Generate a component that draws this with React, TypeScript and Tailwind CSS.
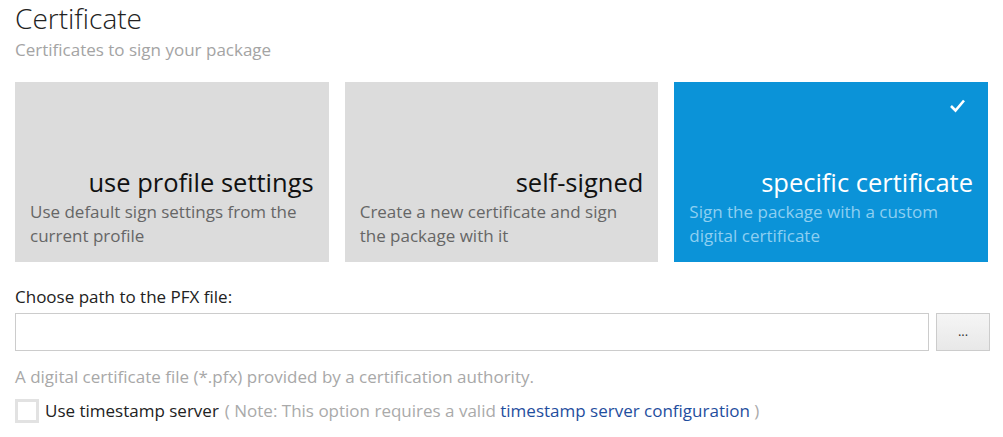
import React from 'react';

const font = { fontFamily: '"Open Sans", "Noto Sans", sans-serif' };

interface CardProps {
  title: string;
  text: string;
  selected?: boolean;
}

function OptionCard({ title, text, selected }: CardProps) {
  return (
    <div
      className={`relative flex h-[180px] w-[314px] flex-col justify-end px-[15px] pb-[14px] ${
        selected ? 'bg-[#0b93d8]' : 'bg-[#dcdcdc]'
      }`}
    >
      {selected && (
        <svg className="absolute right-[22px] top-[16px]" width="17" height="15" viewBox="0 0 17 15">
          <path d="M2 8 L6.5 12.5 L15 2.5" fill="none" stroke="#fff" strokeWidth="2.6" />
        </svg>
      )}
      <div
        className={`mb-[3px] text-right text-[25.5px] leading-[30px] ${selected ? 'text-white' : 'text-[#111]'}`}
      >
        {title}
      </div>
      <div
        className={`h-[48px] text-[17px] leading-[24px] ${selected ? 'text-[#8ecff1]' : 'text-[#666]'}`}
      >
        {text}
      </div>
    </div>
  );
}

export default function App() {
  return (
    <div style={font} className="h-[437px] w-[1003px] overflow-hidden bg-white px-[15px] pt-0">
      {/* Header */}
      <h1 className="text-[28px] font-light leading-[36px] text-[#222]">Certificate</h1>
      <div className="mt-[2px] text-[17px] leading-[24px] text-[#a4a4a4]">
        Certificates to sign your package
      </div>

      {/* Options */}
      <div className="mt-[20px] flex gap-[16px]">
        <OptionCard
          title="use profile settings"
          text="Use default sign settings from the current profile"
        />
        <OptionCard title="self-signed" text="Create a new certificate and sign the package with it" />
        <OptionCard
          title="specific certificate"
          text="Sign the package with a custom digital certificate"
          selected
        />
      </div>

      {/* PFX path */}
      <div className="mt-[23px] text-[17px] leading-[24px] text-[#222]">Choose path to the PFX file:</div>
      <div className="mt-[4px] flex w-[975px] gap-[7px]">
        <input
          type="text"
          className="h-[38px] flex-1 border border-[#cccccc] bg-white px-2 text-[16px] outline-none"
        />
        <button className="h-[38px] w-[54px] border border-[#cccccc] bg-gradient-to-b from-[#f5f5f5] to-[#e8e8e8] text-[13px] text-[#333]">
          ...
        </button>
      </div>
      <div className="mt-[14px] text-[17px] leading-[24px] text-[#a8a8a8]">
        A digital certificate file (*.pfx) provided by a certification authority.
      </div>

      {/* Timestamp */}
      <div className="mt-[10px] flex items-center gap-[6px] text-[17px] leading-[24px]">
        <span className="box-border h-[24px] w-[24px] border-[3px] border-[#e2e2e2] bg-white" />
        <span className="text-[#222]">Use timestamp server</span>
        <span className="text-[#aaaaaa]">
          ( Note: This option requires a valid{' '}
          <a className="text-[#1f4e9e]" href="#">
            timestamp server configuration
          </a>{' '}
          )
        </span>
      </div>
    </div>
  );
}
